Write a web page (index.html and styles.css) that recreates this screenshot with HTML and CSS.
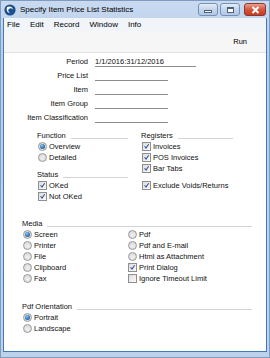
FILE: index.html
```html
<!DOCTYPE html>
<html lang="en">
<head>
  <meta charset="UTF-8">
  <title>Specify Item Price List Statistics</title>
  <link rel="stylesheet" href="styles.css">
</head>
<body>
  <div class="window">
    <div class="titlebar">
      <svg class="app-icon" width="12" height="12" viewBox="0 0 12 12">
        <circle cx="6" cy="6" r="5.6" fill="#1d4f8c"/>
        <path d="M3 3.2 C5 1.8 8.6 2.4 9 5.4 C8 4 6 3.8 4.8 5 C3.8 6 4.2 8 6 8.8 C3.6 9 2 6.2 3 3.2 Z" fill="#fff"/>
      </svg>
      <span class="title">Specify Item Price List Statistics</span>
      <div class="controls">
        <span class="ctl"><span class="glyph-min"></span></span>
        <span class="ctl"><span class="glyph-max"></span></span>
        <span class="ctl close">
          <svg width="9" height="8" viewBox="0 0 9 8"><path d="M1.5 1 L7.5 7 M7.5 1 L1.5 7" stroke="#fff" stroke-width="2"/></svg>
        </span>
      </div>
    </div>

    <div class="client">
      <div class="menubar">
        <span>File</span><span>Edit</span><span>Record</span><span>Window</span><span>Info</span>
      </div>
      <div class="toolbar"><span>Run</span></div>

      <div class="content">
        <div class="fields">
          <label>Period</label><span class="field wide">1/1/2016:31/12/2016</span>
          <label>Price List</label><span class="field"></span>
          <label>Item</label><span class="field"></span>
          <label>Item Group</label><span class="field"></span>
          <label>Item Classification</label><span class="field"></span>
        </div>

        <div class="groups">
          <div class="col">
            <div class="head"><span>Function</span><i></i></div>
            <div class="opt"><span class="radio on"></span><span>Overview</span></div>
            <div class="opt"><span class="radio"></span><span>Detailed</span></div>
            <div class="head gap"><span>Status</span><i></i></div>
            <div class="opt"><span class="check"><svg viewBox="0 0 9 9"><path d="M2 4.2 L3.9 6.6 L7.3 1.6"/></svg></span><span>OKed</span></div>
            <div class="opt"><span class="check"><svg viewBox="0 0 9 9"><path d="M2 4.2 L3.9 6.6 L7.3 1.6"/></svg></span><span>Not OKed</span></div>
          </div>
          <div class="col">
            <div class="head"><span>Registers</span><i></i></div>
            <div class="opt"><span class="check"><svg viewBox="0 0 9 9"><path d="M2 4.2 L3.9 6.6 L7.3 1.6"/></svg></span><span>Invoices</span></div>
            <div class="opt"><span class="check"><svg viewBox="0 0 9 9"><path d="M2 4.2 L3.9 6.6 L7.3 1.6"/></svg></span><span>POS Invoices</span></div>
            <div class="opt"><span class="check"><svg viewBox="0 0 9 9"><path d="M2 4.2 L3.9 6.6 L7.3 1.6"/></svg></span><span>Bar Tabs</span></div>
            <div class="opt gap"><span class="check"><svg viewBox="0 0 9 9"><path d="M2 4.2 L3.9 6.6 L7.3 1.6"/></svg></span><span>Exclude Voids/Returns</span></div>
          </div>
        </div>

        <div class="section media">
          <div class="head"><span>Media</span><i></i></div>
          <div class="two">
            <div class="col">
              <div class="opt"><span class="radio on"></span><span>Screen</span></div>
              <div class="opt"><span class="radio"></span><span>Printer</span></div>
              <div class="opt"><span class="radio"></span><span>File</span></div>
              <div class="opt"><span class="radio"></span><span>Clipboard</span></div>
              <div class="opt"><span class="radio"></span><span>Fax</span></div>
            </div>
            <div class="col">
              <div class="opt"><span class="radio"></span><span>Pdf</span></div>
              <div class="opt"><span class="radio"></span><span>Pdf and E-mail</span></div>
              <div class="opt"><span class="radio"></span><span>Html as Attachment</span></div>
              <div class="opt"><span class="check"><svg viewBox="0 0 9 9"><path d="M2 4.2 L3.9 6.6 L7.3 1.6"/></svg></span><span>Print Dialog</span></div>
              <div class="opt"><span class="check"><svg viewBox="0 0 9 9"></svg></span><span class="label">Ignore Timeout Limit</span></div>
            </div>
          </div>
        </div>

        <div class="section orient">
          <div class="head"><span>Pdf Orientation</span><i></i></div>
          <div class="opt"><span class="radio on"></span><span>Portrait</span></div>
          <div class="opt"><span class="radio"></span><span>Landscape</span></div>
        </div>
      </div>
    </div>
  </div>
</body>
</html>
```

FILE: styles.css
```css
* { box-sizing: border-box; }
body {
  margin: 0;
  font-family: "Liberation Sans", Arial, sans-serif;
  font-size: 7.5px; color: #111;
}
.window {
  width: 270px; height: 358px;
  display: flex; flex-direction: column;
  background: linear-gradient(#c9daf0, #b9cfea 40px, #bed2ec);
  border: 1px solid #7e9bc2;
  padding: 0 2px 5px;
}
.titlebar {
  height: 17px; display: flex; align-items: center;
  padding-left: 1px;
}
.app-icon { flex: none; }
.title { font-size: 8px; color: #000; margin-left: 4px; }
.controls { margin-left: auto; display: flex; align-items: center; margin-right: 1px; }
.ctl {
  width: 20px; height: 13px; margin-left: 2px;
  border: 1px solid #7390b8; border-radius: 3px;
  background: linear-gradient(#e4edf8, #c3d4ea 50%, #b3c8e4);
  display: flex; align-items: center; justify-content: center;
}
.ctl.close {
  width: 22px; margin-left: 4px;
  border-color: #8a3a2c;
  background: linear-gradient(#e9a08f, #d6553c 50%, #c43b22);
}
.glyph-min { width: 8px; height: 3px; background: #fff; border: 1px solid #4d607c; margin-top: 4px; }
.glyph-max { width: 7px; height: 6px; border: 1px solid #4d607c; border-top-width: 2px; background: #fff; }

.client {
  flex: 1; display: flex; flex-direction: column;
  background: #fff;
  border: 1px solid #3e79b8; border-top: none;
}
.menubar {
  height: 13px; display: flex; align-items: center;
  padding-left: 3px; font-size: 8px; color: #000;
  background: #f1f5fa;
}
.menubar span { margin-right: 10px; }
.toolbar {
  height: 22px; display: flex; align-items: center; justify-content: flex-end;
  padding-right: 19px; background: #f6f6f6; color: #000;
  border-bottom: 1px solid #e2e2e2;
}
.content { padding-top: 2px; }

.fields {
  display: grid; grid-template-columns: 84px auto;
  column-gap: 7px; align-items: center;
}
.fields label { text-align: right; line-height: 14px; }
.field {
  width: 73px; height: 10px; line-height: 10px;
  border-bottom: 1px solid #8c8c8c;
}
.field.wide { width: 101px; }

.head { display: flex; align-items: center; line-height: 11px; }
.head i {
  flex: 1; height: 1px; background: #d4d4d4; margin: 5px 0 0 5px;
}
.opt { display: flex; align-items: center; line-height: 11px; color: #111; }
.opt .label { color: #111; }
.gap { margin-top: 6px; }

.groups {
  display: grid; grid-template-columns: 91px 92px; column-gap: 13px;
  margin: 5px 0 0 33px;
}
.groups .opt { padding-left: 1px; }

.radio {
  width: 9px; height: 9px; margin-right: 2px; flex: none;
  border-radius: 50%; border: 1px solid #9a9a9a;
  background: radial-gradient(circle at 50% 60%, #f2f2f2, #d0d0d0);
  display: flex; align-items: center; justify-content: center;
}
.radio.on::after {
  content: ""; width: 5px; height: 5px; border-radius: 50%;
  background: radial-gradient(circle at 40% 35%, #8ec4f0, #2b6cb4 60%, #154a8a);
}
.check {
  width: 9px; height: 9px; margin-right: 2px; flex: none;
  border: 1px solid #8f8f8f;
  background: linear-gradient(135deg, #dcdcdc, #fbfbfb);
}
.check svg { display: block; width: 7px; height: 7px; }
.check path { fill: none; stroke: #2d4f9a; stroke-width: 1.3; }

.section { margin-left: 18px; margin-right: 14px; }
.media { margin-top: 16px; }
.two { display: grid; grid-template-columns: 106px auto; }
.media .col:first-child .opt { padding-left: 1px; }
.orient { margin-top: 17px; }
.orient .opt { padding-left: 1px; }
```
